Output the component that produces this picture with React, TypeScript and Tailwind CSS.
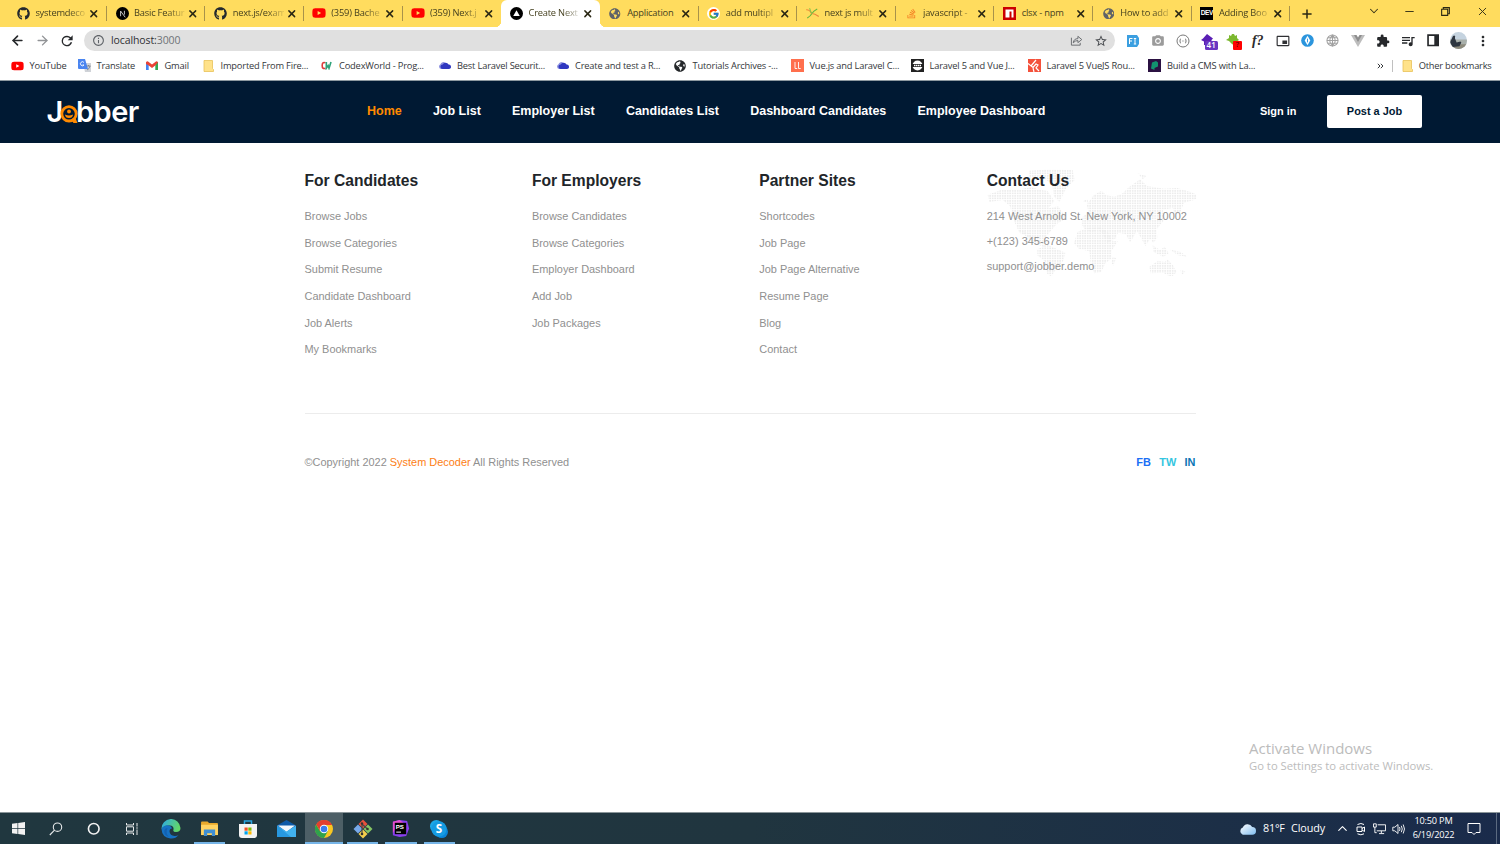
import React from "react";
import {
  FaGithub, FaYoutube, FaStackOverflow, FaGlobeAmericas,
} from "react-icons/fa";
import { FcGoogle } from "react-icons/fc";
import {
  MdInfoOutline, MdStarBorder, MdExtension, MdPictureInPictureAlt, MdQueueMusic,
  MdPhotoCamera, MdMoreVert,
} from "react-icons/md";
import { ArrowLeft, ArrowRight, X, Plus, ChevronDown, ChevronUp, Minus } from "lucide-react";

const ui = "font-['Open_Sans','Noto_Sans',sans-serif]";

/* ---------- favicons ---------- */

const Next = () => (
  <svg viewBox="0 0 24 24" className="size-[13px]">
    <circle cx="12" cy="12" r="12" fill="#000" />
    <path d="M8.5 17V7.5L17 19M15.5 7v7" fill="none" stroke="#ddd" strokeWidth="1.6" />
  </svg>
);
const Vercel = () => (
  <svg viewBox="0 0 24 24" className="size-[13px]">
    <circle cx="12" cy="12" r="12" fill="#000" />
    <path d="M12 6l6 10.500H6z" fill="#fff" />
  </svg>
);
const GoogleTab = () => (
  <span className="flex size-[13px] items-center justify-center rounded-full bg-white">
    <FcGoogle className="size-[11.500px]" />
  </span>
);
const Star = () => (
  <svg viewBox="0 0 24 24" className="size-[13px]" fill="none" strokeWidth="2" strokeLinecap="round">
    <path d="M1 5q6 0 9 7" stroke="#f08a3c" />
    <path d="M20 4q-6 3-9 8-3 5-8 8" stroke="#69b53c" />
    <path d="M11 12q5 0 12 5" stroke="#e9853b" />
    <path d="M7 3q1 6 4 9" stroke="#8bc34a" />
  </svg>
);
const Npm = () => (
  <svg viewBox="0 0 26 26" className="size-[13px]">
    <path d="M0 0h26v26H0z" fill="#cb0000" />
    <path d="M5 5h16v16h-4V9h-4v12H5z" fill="#fff" />
  </svg>
);
const Dev = () => (
  <span className="flex h-[13px] w-[13px] items-center justify-center bg-black font-['Liberation_Sans',sans-serif] text-[6.500px] font-bold leading-none tracking-[-0.300px] text-white">
    DEV
  </span>
);

type Tab = { title: string; icon: React.ReactNode; active?: boolean; line?: boolean };
const globe = <FaGlobeAmericas className="size-[11.500px] text-[#5f6368]" />;
const gh = <FaGithub className="size-[13px] text-[#24292e]" />;
const yt = <FaYoutube className="size-[14px] text-[#f00]" />;
const tabs: Tab[] = [
  { title: "systemdeco", icon: gh, line: true },
  { title: "Basic Featur", icon: <Next />, line: true },
  { title: "next.js/exam", icon: gh, line: true },
  { title: "(359) Bache", icon: yt, line: true },
  { title: "(359) Next.j", icon: yt },
  { title: "Create Next", icon: <Vercel />, active: true },
  { title: "Application", icon: globe, line: true },
  { title: "add multipl", icon: <GoogleTab />, line: true },
  { title: "next js mult", icon: <Star />, line: true },
  { title: "javascript -", icon: <FaStackOverflow className="size-[11px] text-[#f48024]" />, line: true },
  { title: "clsx - npm", icon: <Npm />, line: true },
  { title: "How to add", icon: globe, line: true },
  { title: "Adding Boo", icon: <Dev />, line: true },
];

function TabStrip() {
  return (
    <div className="flex h-[26.500px] shrink-0 bg-[#ffdc5e] pl-[8.200px]">
      {tabs.map((t) => (
        <div
          key={t.title}
          className={
            "relative flex h-full w-[98.640px] shrink-0 items-center pl-[8.200px] text-[#45401f] " +
            (t.active ? "rounded-t-[6px] bg-white" : "")
          }
        >
          {t.active && (
            <>
              <span className="absolute bottom-0 -left-[6px] size-[6px] bg-[radial-gradient(circle_at_0_0,transparent_6px,white_6.5px)]" />
              <span className="absolute bottom-0 -right-[6px] size-[6px] bg-[radial-gradient(circle_at_100%_0,transparent_6px,white_6.5px)]" />
            </>
          )}
          <span className="flex w-[14px] shrink-0 justify-center">{t.icon}</span>
          <span
            className={
              "ml-[5px] w-[51px] shrink-0 whitespace-nowrap text-[9.300px] tracking-[-0.200px] " +
              (t.title === "Application" || t.title === "clsx - npm"
                ? ""
                : "[mask-image:linear-gradient(to_right,black_65%,rgba(0,0,0,0.15))]")
            }
          >
            {t.title}
          </span>
          <X className="ml-[2px] size-[11.500px] shrink-0 text-[#2b2814]" strokeWidth={3} />
          {t.line && <span className="absolute right-0 top-[6px] h-[15px] w-px bg-[#a8924a]" />}
        </div>
      ))}
      <Plus className="ml-[9.500px] mt-[6.500px] size-[14px] text-[#2b2814]" strokeWidth={2.6} />
      <div className="ml-auto flex h-[22px] items-center pr-[11px] text-[#3a3519]">
        <ChevronDown className="mr-[22px] size-[14px]" strokeWidth={1.8} />
        <Minus className="mr-[24px] size-[13px]" strokeWidth={1.8} />
        <svg viewBox="0 0 10 10" className="mr-[25px] size-[11px]" fill="none" stroke="#2b2814" strokeWidth="1">
          <path d="M1.500 3h5.500v5.500H1.500zM3 3V1.500h5.500V7H7" />
        </svg>
        <X className="size-[13px]" strokeWidth={1.8} />
      </div>
    </div>
  );
}

/* ---------- toolbar ---------- */

const Reload = () => (
  <svg viewBox="0 0 24 24" className="size-[16px]" fill="#26282b">
    <path d="M17.650 6.350A7.950 7.950 0 0 0 12 4a8 8 0 1 0 7.730 10h-2.480A5.800 5.800 0 1 1 12 6.200c1.660 0 3.100.7 4.180 1.760L13 11h7.500V3.500z" />
  </svg>
);

const extensions: React.ReactNode[] = [
  <svg viewBox="0 0 14 14" className="size-[14px]">
    <path d="M1 1h10l2 3v6l-2 3H1z" fill="#3b9fe0" />
    <path d="M3.500 10V4.500h3M3.500 7h2.500M9 4.500V10M7.800 4.500h2.400M7.800 10h2.400" stroke="#fff" strokeWidth="1" fill="none" />
  </svg>,
  <MdPhotoCamera className="size-[14px] text-[#9b9b9b]" />,
  <svg viewBox="0 0 14 14" className="size-[14px]" fill="none" stroke="#6a6a6a">
    <circle cx="7" cy="7" r="6" strokeWidth=".9" />
    <path d="M5 4.800Q3.800 5 4 7q-.2 2 1 2.200M9 4.800q1.200.2 1 2.200.2 2-1 2.200M6 7h.6M7.500 7h.6" strokeWidth=".9" />
  </svg>,
  <span className="relative block size-[14px]">
    <svg viewBox="0 0 14 14" className="size-[14px]" fill="#5a1fb5">
      <path d="M6 0l6 4.500L10.500 6v5H3V7.500L0 6l2-1.500z" />
    </svg>
    <span className="absolute left-[4px] top-[7px] flex h-[9.500px] w-[13px] items-center justify-center rounded-[1.500px] bg-[#6a35c0] text-[8px] font-semibold leading-none text-white">41</span>
  </span>,
  <span className="relative block size-[14px]">
    <svg viewBox="0 0 14 14" className="size-[14px]" fill="#7cb82f">
      <path d="M3 1l2 1 1-2h2l1 2 2-1v3l2 2-3 2-1 4-3-2L3 7 0 6l3-2z" />
    </svg>
    <span className="absolute left-[7px] top-[7px] flex h-[9px] w-[9.500px] items-center justify-center rounded-[1px] bg-[#f00] text-[7.500px] leading-none text-[#400]">?</span>
  </span>,
  <span className="font-['Liberation_Serif',serif] text-[14px] font-bold italic leading-none text-[#2b2b2b]">f?</span>,
  <MdPictureInPictureAlt className="size-[14px] text-[#303134]" />,
  <svg viewBox="0 0 14 14" className="size-[13px]">
    <circle cx="7" cy="7" r="6.800" fill="#2b95dd" />
    <path d="M7 2l3 5-3 5-3-5z" fill="#fff" />
    <path d="M7 5v4" stroke="#2b95dd" />
  </svg>,
  <svg viewBox="0 0 14 14" className="size-[13px]" fill="none" stroke="#a0a0a0" strokeWidth="1.100">
    <circle cx="7" cy="7" r="6" />
    <path d="M7 1v12M1 7h12M2 4h10M2 10h10M7 1q-6 6 0 12M7 1q6 6 0 12" />
  </svg>,
  <svg viewBox="0 0 14 12" className="h-[12px] w-[14px]">
    <path d="M0 0h14L7 12z" fill="#bdbdbd" />
    <path d="M3 0h8L7 7z" fill="#8d8d8d" />
    <path d="M5.500 0h3L7 2.600z" fill="#fff" />
  </svg>,
  <MdExtension className="size-[14px] text-[#26282b]" />,
  <MdQueueMusic className="size-[16px] text-[#26282b]" />,
  <svg viewBox="0 0 12 12" className="size-[12.500px]">
    <path d="M1 1h10v10H1z" fill="none" stroke="#26282b" strokeWidth="1.600" />
    <path d="M7 1h4v10H7z" fill="#26282b" />
  </svg>,
  <svg viewBox="0 0 18 18" className="size-[17px]">
    <defs><clipPath id="avatar"><circle cx="9" cy="9" r="9" /></clipPath></defs>
    <g clipPath="url(#avatar)">
      <path d="M0 0h18v18H0z" fill="#c5d3df" />
      <path d="M0 8h18v10H0z" fill="#a9b0ab" />
      <path d="M0 13h18v5H0z" fill="#8d8a7c" />
      <path d="M3 4.500q1.500-1.500 2.500 0l-.3 2 1.800 4.500 4-1 1 1-2 4-7 1-3-5z" fill="#2e3640" />
    </g>
  </svg>,
  <MdMoreVert className="size-[16px] text-[#26282b]" />,
];

function Toolbar() {
  return (
    <div className="flex h-[28px] shrink-0 items-center bg-white">
      <ArrowLeft className="ml-[10px] size-[15px] text-[#26282b]" strokeWidth={2.6} />
      <ArrowRight className="ml-[10px] size-[15px] text-[#919396]" strokeWidth={2.2} />
      <span className="ml-[9px]"><Reload /></span>
      <div className="ml-[9px] flex h-[21.500px] w-[1031px] items-center rounded-full bg-[#e0e0e0] pl-[8px] pr-[7px]">
        <MdInfoOutline className="size-[13px] text-[#5f6368]" />
        <span className="ml-[6px] text-[10.500px] tracking-[-0.100px] text-[#303134]">
          localhost:<span className="text-[#6f7377]">3000</span>
        </span>
        <svg viewBox="0 0 14 14" className="ml-auto size-[13px]" fill="none" stroke="#65686c" strokeWidth="1">
          <path d="M1.500 4v8h9.500V9.500M3.500 9.500Q4 5 8.500 5V2.500L12.700 6 8.500 9.300V7Q5.500 7 3.500 9.500z" />
        </svg>
        <MdStarBorder className="ml-[11px] size-[14px] text-[#4a4d51]" />
      </div>
      <div className="ml-[5px] flex">
        {extensions.map((icon, i) => (
          <span key={i} className="flex h-[18px] w-[25.050px] items-center justify-center">{icon}</span>
        ))}
      </div>
    </div>
  );
}

/* ---------- bookmarks ---------- */

const Folder = () => (
  <svg viewBox="0 0 11 12" className="h-[12px] w-[11px]">
    <path d="M1 .5h8.500v8l1 1v2H1z" fill="#ffe28a" stroke="#e8c258" strokeWidth=".8" />
  </svg>
);
const Cloud = () => (
  <svg viewBox="0 0 14 10" className="h-[9px] w-[13px]">
    <path d="M3 9a3 3 0 0 1-.5-5.500A3.500 3.500 0 0 1 8 2v7z" fill="#8f93e0" />
    <path d="M5 9a2.500 2.500 0 0 1 0-5 3.600 3.600 0 0 1 6.500 0A2.500 2.500 0 0 1 12 9z" fill="#3038c0" />
  </svg>
);

const bookmarks: { title: string; width: string; icon: React.ReactNode }[] = [
  { title: "YouTube", width: "w-[67px]", icon: <FaYoutube className="size-[14px] text-[#f00]" /> },
  {
    title: "Translate", width: "w-[68px]",
    icon: (
      <svg viewBox="0 0 13 13" className="size-[13px]">
        <path d="M5 4h8v9H7z" fill="#d0d3d8" />
        <path d="M0 0h7l3 10H1a1 1 0 0 1-1-1z" fill="#4a85f0" />
        <path d="M6 3.500A2 2 0 1 0 6 6H4.500" stroke="#fff" fill="none" strokeWidth=".9" />
        <path d="M8.500 7h4M10.500 6v1M9 11q2.500-1 3-4" stroke="#6a7480" fill="none" strokeWidth=".7" />
      </svg>
    ),
  },
  {
    title: "Gmail", width: "w-[56px]",
    icon: (
      <svg viewBox="0 0 12 9" className="h-[9px] w-[12px]">
        <path d="M0 1h2.700v8H0z" fill="#4285f4" />
        <path d="M9.300 1H12v8H9.300z" fill="#34a853" />
        <path d="M0 1.500Q1-.5 2.700.9L6 3.400 9.300.9Q11-.5 12 1.500L9.300 4.500 6 7 2.700 4.500 0 3z" fill="#ea4335" />
      </svg>
    ),
  },
  { title: "Imported From Fire...", width: "w-[118.500px]", icon: <Folder /> },
  {
    title: "CodexWorld - Prog...", width: "w-[118px]",
    icon: (
      <svg viewBox="0 0 12 10" className="h-[9px] w-[11px]" fill="none" strokeWidth="1.800">
        <path d="M4.800 2Q1.200.5 1.200 5t3.600 3" stroke="#dd3b3b" />
        <path d="M5.800 1v7l2-3 1 3 2.200-7" stroke="#2fa27a" />
      </svg>
    ),
  },
  { title: "Best Laravel Securit...", width: "w-[118px]", icon: <Cloud /> },
  { title: "Create and test a R...", width: "w-[117.500px]", icon: <Cloud /> },
  { title: "Tutorials Archives -...", width: "w-[117px]", icon: <FaGlobeAmericas className="size-[12px] text-[#24272a]" /> },
  {
    title: "Vue.js and Laravel C...", width: "w-[120px]",
    icon: (
      <svg viewBox="0 0 13 13" className="size-[13px]">
        <path d="M0 0h13v13H0z" fill="#ff6f4d" />
        <path d="M4 3v6.500h2.200M7.500 3v6.500h2.200" stroke="#fff" strokeWidth=".9" fill="none" />
      </svg>
    ),
  },
  {
    title: "Laravel 5 and Vue J...", width: "w-[117px]",
    icon: (
      <svg viewBox="0 0 13 13" className="size-[13px]">
        <path d="M0 0h13v13H0z" fill="#222" />
        <circle cx="6.500" cy="6.500" r="5" fill="#fff" />
        <path d="M1 5h11v3H1z" fill="#222" />
        <path d="M3 6.500h7" stroke="#fff" strokeWidth="1.300" strokeDasharray="1.500 .5" />
      </svg>
    ),
  },
  {
    title: "Laravel 5 VueJS Rou...", width: "w-[120.500px]",
    icon: (
      <svg viewBox="0 0 13 13" className="size-[13px]">
        <path d="M0 0h13v13H0z" fill="#f4513b" />
        <path d="M0 4.500l5 4 3-3.500 2 1-2 3 3 3M3 7l5-6M5 9l1 4" stroke="#fff" strokeWidth="1.200" fill="none" />
      </svg>
    ),
  },
  {
    title: "Build a CMS with La...", width: "w-[120px]",
    icon: (
      <svg viewBox="0 0 13 13" className="size-[13px]">
        <path d="M0 0h13v13H0z" fill="#2b1142" />
        <path d="M4 3.500l4-1.500 2 1.500v4L6.500 9v2L3 9.500z" fill="#12936f" />
      </svg>
    ),
  },
];

function BookmarksBar() {
  return (
    <div className="flex h-[25.500px] shrink-0 items-center bg-white pb-[3px] pl-[10.500px] text-[9.300px] tracking-[-0.180px] text-[#34373b]">
      {bookmarks.map((b) => (
        <div key={b.title} className={"flex shrink-0 items-center whitespace-nowrap " + b.width}>
          <span className="flex w-[13px] shrink-0 justify-center">{b.icon}</span>
          <span className="ml-[6px]">{b.title}</span>
        </div>
      ))}
      <div className="ml-auto flex items-center whitespace-nowrap pr-[8.500px]">
        <svg viewBox="0 0 7 6" className="h-[6px] w-[7px]" fill="none" stroke="#34373b" strokeWidth="1">
          <path d="M.8.8L3 3 .8 5.200M3.800.8L6 3 3.800 5.200" />
        </svg>
        <span className="ml-[8px] mr-[9px] h-[12px] w-px bg-[#c0c0c0]" />
        <Folder />
        <span className="ml-[6px] tracking-[-0.240px]">Other bookmarks</span>
      </div>
    </div>
  );
}

/* ---------- site ---------- */

function Logo() {
  return (
    <div className="flex w-[96px] items-end font-['Inter','Open_Sans',sans-serif] text-[29px] font-semibold leading-[30px] text-white">
      <span className="w-[13px]">J</span>
      <svg viewBox="0 0 18 18" className="mb-[4px] size-[18px] shrink-0">
        <circle cx="9" cy="8.800" r="7.200" fill="none" stroke="#ff8a00" strokeWidth="2.800" />
        <path d="M11 14.500l4-2.500 2.500 6h-4z" fill="#ff8a00" />
        <circle cx="9" cy="6.500" r="1.900" fill="#ff8a00" />
        <path d="M5 9.500q4 2 8 0-.3 3.500-4 3.500T5 9.500z" fill="#ff8a00" />
      </svg>
      <span className="-ml-[1.500px] tracking-[-0.500px]">bber</span>
    </div>
  );
}

function Navbar() {
  return (
    <header className="flex h-[62px] shrink-0 items-center bg-[#001933] pb-px pl-[46.500px] pr-[78px] font-bold text-white">
      <Logo />
      <nav className="ml-[224.500px] flex gap-[31.200px] whitespace-nowrap text-[12.500px]">
        <a className="text-[#ff8a00]">Home</a>
        <a>Job List</a>
        <a>Employer List</a>
        <a>Candidates List</a>
        <a>Dashboard Candidates</a>
        <a>Employee Dashboard</a>
      </nav>
      <div className="ml-auto flex items-center text-[10.940px]">
        <a>Sign in</a>
        <a className="ml-[30.500px] flex h-[33px] w-[95px] items-center justify-center rounded-[2px] bg-white text-[#001933]">
          Post a Job
        </a>
      </div>
    </header>
  );
}

const columns = [
  { title: "For Candidates", links: ["Browse Jobs", "Browse Categories", "Submit Resume", "Candidate Dashboard", "Job Alerts", "My Bookmarks"] },
  { title: "For Employers", links: ["Browse Candidates", "Browse Categories", "Employer Dashboard", "Add Job", "Job Packages"] },
  { title: "Partner Sites", links: ["Shortcodes", "Job Page", "Job Page Alternative", "Resume Page", "Blog", "Contact"] },
];

const WorldMap = () => (
  <svg viewBox="50 24 630 324" className="absolute -left-[1px] -top-[2px] -z-10 h-[108px] w-[210px]">
    <defs>
      <pattern id="dots" width="7.500" height="7.500" patternUnits="userSpaceOnUse">
        <rect width="5" height="5" rx="1.500" fill="#ebebeb" />
      </pattern>
    </defs>
    <g fill="url(#dots)">
      <path d="M55 104l40-14 60-2 30-8 20 8 30 5 20 30-18 22 30-6 25 35-30 18-24 28-18 26-30-8-40-20-14-30-14-50-22-18-40 6z" />
      <path d="M180 32l60-4 70 2 6 30-26 26-20 40-16-16-6-40-40-20-28 6z" />
      <path d="M150 210l30 10 24 24 30 6-10 12-34-16z" />
      <path d="M204 268l30-14 22 10 32 14-6 24-22 26-14 22-14-10-6-36-22-18z" />
      <path d="M324 216l28-12 42-2 22 14 12 26 18 2-18 26-2 26-18 14-12 26-22 4-10-32-4-34-32-8-14-16z" />
      <path d="M338 194l2-24 18-14-6-22 22-30 22-12 16 14 24 4 24-10 20-20 32-22 22 20 50 8 40-2 40 12 30 12-20 12-30 8-12 30-16 4-6-18-30 6 2 34-20 24 2 26-12 14-10-10-14 20-14-26-12-20-10 20-10 14-14-24-22-4-8 18-26 14-10-26-14-14-22 6-20-8z" />
      <path d="M550 256l22 14 14-10 12 20-16 10-30-14zM600 268l34 8 20 14-28-4z" />
      <path d="M540 320l26-18 20 4 8-8 16 16 12 22-16 16-24-14-38 2zM634 330l14 4-12 14z" />
      <path d="M430 290l10 4-8 24-6-10zM340 124l14-6 4 10zM505 40l26 8-10 10z" />
    </g>
  </svg>
);

function Footer() {
  return (
    <footer className="pl-[304.500px] pr-[304.500px] pt-[26.500px] text-[10.940px] leading-[16px] text-[#909090]">
      <div className="flex h-[244px] border-b border-[#ececec]">
        {columns.map((c) => (
          <section key={c.title} className="w-[227.400px] shrink-0">
            <h3 className="text-[15.625px] font-bold leading-[22px] text-[#212529]">{c.title}</h3>
            <ul className="mt-[16.900px] flex flex-col gap-[10.560px]">
              {c.links.map((l) => <li key={l}>{l}</li>)}
            </ul>
          </section>
        ))}
        <section className="relative isolate w-[209px] shrink-0 whitespace-nowrap">
          <WorldMap />
          <h3 className="text-[15.625px] font-bold leading-[22px] text-[#212529]">Contact Us</h3>
          <ul className="mt-[16px] flex flex-col gap-[9px]">
            <li>214 West Arnold St. New York, NY 10002</li>
            <li>+(123) 345-6789</li>
            <li>support@jobber.demo</li>
          </ul>
        </section>
      </div>
      <div className="flex items-center justify-between pt-[40.500px]">
        <p>©Copyright 2022 <span className="text-[#fd7e14]">System Decoder</span> All Rights Reserved</p>
        <div className="flex gap-[8.300px] font-bold">
          <span className="text-[#1b6ff5]">FB</span>
          <span className="text-[#35c5e0]">TW</span>
          <span className="text-[#0a76b5]">IN</span>
        </div>
      </div>
    </footer>
  );
}

/* ---------- taskbar ---------- */

const system: React.ReactNode[] = [
  <svg viewBox="0 0 13 13" className="size-[13px]" fill="#f2f2f2">
    <path d="M0 1.800l5.500-.8v5.200H0zM6.200.9L13 0v6.200H6.200zM0 6.900h5.500V12L0 11.300zM6.200 6.900H13V13l-6.800-.9z" />
  </svg>,
  <svg viewBox="0 0 14 14" className="size-[14px]" fill="none" stroke="#e6e9ea" strokeWidth="1.100">
    <circle cx="8.500" cy="5.200" r="4.200" /><path d="M5.500 8.200L.8 13" />
  </svg>,
  <svg viewBox="0 0 14 14" className="size-[13.500px]" fill="none" stroke="#f2f2f2" strokeWidth="1.700"><circle cx="7" cy="7" r="5.500" /></svg>,
  <svg viewBox="0 0 14 14" className="size-[14px]" fill="none" stroke="#e6e9ea" strokeWidth="1">
    <path d="M1.500 1v2h7V1M1.500 4.800h7v4.400h-7zM1.500 13v-2h7v2M12 1v3.500M12 7.500V13M11.200 6h1.600" />
  </svg>,
];

const apps: { name: string; open?: boolean; active?: boolean; icon: React.ReactNode }[] = [
  {
    name: "edge",
    icon: (
      <svg viewBox="0 0 20 20" className="size-[20px]">
        <defs>
          <linearGradient id="edge" x1="0" x2="1" y1="0" y2=".3"><stop offset="0" stopColor="#2ba9e8" /><stop offset="1" stopColor="#62d66a" /></linearGradient>
        </defs>
        <path d="M.5 10A9.500 9.500 0 0 1 19.500 9q0 4-4.500 4-3.500 0-2.500-2.500Q13 7 9 6.500 3 6 .5 10z" fill="url(#edge)" />
        <path d="M.5 10Q3 5.500 8 6.500q3 .8 3 3-2.500 0-2.500 3 .5 4 5 4.500 2.500.2 4-1-3 4-8 3.500Q1 18.500.5 10z" fill="#1672c4" />
        <path d="M6.500 9q-2.500 5 1.500 9Q2 16 3.500 11 4.500 9 6.500 9z" fill="#0f4f9c" opacity=".5" />
      </svg>
    ),
  },
  {
    name: "explorer", open: true,
    icon: (
      <svg viewBox="0 0 18 16" className="h-[15px] w-[17px]">
        <path d="M0 1.500Q0 .5 1 .5h6L8.500 2H17q1 0 1 1v12H0z" fill="#e8a92c" />
        <path d="M0 4h18v11H0z" fill="#ffd362" />
        <path d="M3 9h12v7h-3.500v-3h-5v3H3z" fill="#3f8fd4" />
      </svg>
    ),
  },
  {
    name: "store",
    icon: (
      <svg viewBox="0 0 18 18" className="size-[18px]">
        <path d="M5.500 5V1h7v4" fill="none" stroke="#2aa5e0" strokeWidth="1.500" />
        <path d="M0 4h18v11q0 3-3 3H3q-3 0-3-3z" fill="#f3f3f3" />
        <path d="M5.500 7.500h3.200v3.200H5.500z" fill="#f25022" /><path d="M9.300 7.500h3.200v3.200H9.300z" fill="#7fba00" />
        <path d="M5.500 11.300h3.200v3.200H5.500z" fill="#00a4ef" /><path d="M9.300 11.300h3.200v3.200H9.300z" fill="#ffb900" />
      </svg>
    ),
  },
  {
    name: "mail",
    icon: (
      <svg viewBox="0 0 19 17" className="h-[17px] w-[19px]">
        <path d="M0 5.500L9.500 0 19 5.500V11H0z" fill="#0d5aa8" />
        <path d="M1 5.500h17L9.500 12z" fill="#f2f8fc" />
        <path d="M0 5.500l9.500 6 9.500-6V17H0z" fill="#41b2ef" />
        <path d="M0 17V5.500L14 17z" fill="#2798e0" />
      </svg>
    ),
  },
  {
    name: "chrome", open: true, active: true,
    icon: (
      <svg viewBox="0 0 20 20" className="size-[18px]">
        <circle cx="10" cy="10" r="10" fill="#f9c722" />
        <path d="M1.300 5A10 10 0 0 0 10 20l4.300-7.500L10 10 5.700 12.500z" fill="#2fa24c" />
        <path d="M10 5.500h8.900L18.700 5A10 10 0 0 0 1.300 5l4.400 7.500z" fill="#e2402f" />
        <circle cx="10" cy="10" r="4.700" fill="#fff" /><circle cx="10" cy="10" r="3.700" fill="#3b7ded" />
      </svg>
    ),
  },
  {
    name: "git", open: true,
    icon: (
      <svg viewBox="0 0 20 20" className="size-[20px]">
        <path d="M10 .5l4.500 4.500L10 9.500 5.500 5z" fill="#e8503c" />
        <path d="M5 5.500l4.500 4.500L5 14.500.5 10z" fill="#78a9ea" />
        <path d="M15 5.500l4.500 4.500-4.500 4.500-4.500-4.500z" fill="#86c564" />
        <path d="M10 10.500l4.500 4.500-4.500 4.500L5.500 15z" fill="#f4cf4d" />
        <path d="M9 4v11M9 5l5.500 5" stroke="#4a4a4a" strokeWidth="1.200" />
        <circle cx="9" cy="4.500" r="1.200" fill="#333" /><circle cx="9" cy="15" r="1.300" fill="#333" /><circle cx="14.500" cy="10" r="1.300" fill="#333" />
      </svg>
    ),
  },
  {
    name: "phpstorm", open: true,
    icon: (
      <svg viewBox="0 0 20 20" className="size-[19px]">
        <path d="M2 3l7-2 8 1 2 8-3 8-7 1-7-2z" fill="#8a3ff0" />
        <path d="M2 3l7-2 4 3-9 7-2 4z" fill="#e64fd0" />
        <path d="M4 4h12v12H4z" fill="#000" />
        <path d="M5.500 13.800h5" stroke="#fff" strokeWidth="1" />
        <text x="5" y="10.500" fontSize="6.500" fontWeight="700" fill="#fff" fontFamily="Liberation Sans, sans-serif">PS</text>
      </svg>
    ),
  },
  {
    name: "skype", open: true,
    icon: (
      <svg viewBox="0 0 20 20" className="size-[18px]">
        <circle cx="7" cy="7" r="7" fill="#1ba8e8" /><circle cx="13" cy="13" r="7" fill="#0a84d8" /><circle cx="10" cy="10" r="8.500" fill="#159be2" />
        <text x="10" y="14.500" textAnchor="middle" fontSize="13" fontWeight="700" fill="#fff" fontFamily="Open Sans, sans-serif">S</text>
      </svg>
    ),
  },
];

function Taskbar() {
  return (
    <div className="flex h-[32px] shrink-0 items-center border-t border-[#8a9599] bg-linear-to-r from-[#20373f] via-[#20353f] to-[#1a2b4b] text-white">
      {system.map((icon, i) => (
        <span key={i} className="flex w-[37.600px] shrink-0 items-center justify-center">{icon}</span>
      ))}
      <div className="ml-[1.600px] flex h-full">
        {apps.map((a) => (
          <span key={a.name} className={"relative flex h-full w-[38.300px] items-center justify-center " + (a.active ? "bg-[#4d5f66]" : "")}>
            {a.icon}
            {a.open && (
              <span className={"absolute bottom-0 h-[2px] bg-[#76b5e8] " + (a.active ? "inset-x-0" : "inset-x-[3.500px]")} />
            )}
          </span>
        ))}
      </div>
      <div className="ml-auto flex h-full items-center whitespace-nowrap">
        <svg viewBox="0 0 18 12" className="h-[12px] w-[17px]">
          <defs><linearGradient id="cloud" x1="0" x2="1" y1="0" y2="1"><stop offset="0" stopColor="#fff" /><stop offset="1" stopColor="#7fbdf0" /></linearGradient></defs>
          <path d="M4 12a4 4 0 0 1 0-7.500A5.500 5.500 0 0 1 14 4a4 4 0 0 1 0 8z" fill="url(#cloud)" />
        </svg>
        <span className="ml-[7px] w-[28px] text-[10.800px] tracking-[-0.200px]">81°F</span>
        <span className="w-[43px] text-[10.800px] tracking-[-0.100px]">Cloudy</span>
        <ChevronUp className="ml-[1px] size-[15px]" strokeWidth={1.8} />
        <svg viewBox="0 0 12 14" className="ml-[5px] h-[14px] w-[12px]" fill="none" stroke="#fff" strokeWidth="1">
          <path d="M2 5h5v4.500H2zM7 6.500L9.500 5v4.500L7 8M2.500 2.500q3.500-2 6.500 0M2.500 11.800q3.500 2 6.500 0" />
        </svg>
        <svg viewBox="0 0 14 14" className="ml-[6px] size-[13px]" fill="none" stroke="#fff" strokeWidth="1">
          <path d="M5 3h8.500v6.500H4M9 9.500V12M6.500 12.500H12M.5 2h3v3.500h-3zM2 5.500v6h2" />
        </svg>
        <svg viewBox="0 0 14 14" className="ml-[6px] size-[14px]" fill="none" stroke="#fff" strokeWidth=".9">
          <path d="M.8 5.200h2L6 2.500v9L2.800 8.800h-2zM7.500 5q1 2 0 4M9.300 3.800q1.900 3.200 0 6.400M11.200 2.500q2.600 4.500 0 9" />
        </svg>
        <div className="ml-[5px] flex w-[45px] flex-col items-center pb-px text-[9.200px] leading-[14px] tracking-[-0.200px]">
          <span>10:50 PM</span>
          <span>6/19/2022</span>
        </div>
        <svg viewBox="0 0 14 14" className="ml-[11px] size-[14px]" fill="none" stroke="#fff" strokeWidth="1">
          <path d="M1 1.500h12v9H9l-2 2-2-2H1z" />
        </svg>
        <span className="ml-[15px] mr-[3px] h-full w-px bg-[#5b6a80]" />
      </div>
    </div>
  );
}

export default function App() {
  return (
    <div className={"flex h-[844px] w-[1500px] flex-col overflow-hidden bg-white " + ui}>
      <TabStrip />
      <Toolbar />
      <BookmarksBar />
      <div className="h-px shrink-0 bg-[#8d99a0]" />
      <main className="flex flex-1 flex-col font-['Liberation_Sans',Arial,sans-serif]">
        <Navbar />
        <Footer />
        <div className={"mb-[38px] ml-[1249px] mt-auto whitespace-nowrap text-[#bcbcbc] " + ui}>
          <p className="text-[15px] leading-[20px]">Activate Windows</p>
          <p className="text-[11.250px] leading-[16px]">Go to Settings to activate Windows.</p>
        </div>
      </main>
      <Taskbar />
    </div>
  );
}
